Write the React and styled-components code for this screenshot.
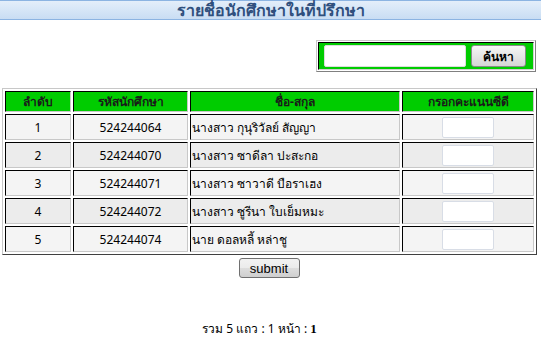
import React, { useState } from "react";
import styled, { createGlobalStyle } from "styled-components";

const students = [
  { no: 1, id: "524244064", name: "นางสาว กุนุริวัลย์ สัญญา" },
  { no: 2, id: "524244070", name: "นางสาว ซาดีลา ปะสะกอ" },
  { no: 3, id: "524244071", name: "นางสาว ซาวาดี บือราเฮง" },
  { no: 4, id: "524244072", name: "นางสาว ซูรีนา ใบเย็มหมะ" },
  { no: 5, id: "524244074", name: "นาย ดอลหลี้ หล่าชู" },
];

const GlobalStyle = createGlobalStyle`
  html, body {
    margin: 0;
    padding: 0;
    background: #ffffff;
  }
  body {
    font-family: Tahoma, "Noto Sans", "DejaVu Sans", sans-serif;
    font-size: 12px;
    color: #000;
  }
`;

const App = () => {
  const [scores, setScores] = useState({});
  const [query, setQuery] = useState("");

  return (
    <Page>
      <GlobalStyle />
      <TitleBar>รายชื่อนักศึกษาในที่ปรึกษา</TitleBar>

      <SearchRow>
        <SearchFrame>
          <SearchCell>
            <SearchInput value={query} onChange={(e) => setQuery(e.target.value)} />
            <SearchButton type="button">ค้นหา</SearchButton>
          </SearchCell>
        </SearchFrame>
      </SearchRow>

      <ListTable>
        <thead>
          <tr>
            <HeadCell $width={66}>ลำดับ</HeadCell>
            <HeadCell $width={115}>รหัสนักศึกษา</HeadCell>
            <HeadCell $width={210}>ชื่อ-สกุล</HeadCell>
            <HeadCell>กรอกคะแนนซีดี</HeadCell>
          </tr>
        </thead>
        <tbody>
          {students.map((s, i) => (
            <tr key={s.id}>
              <Cell $odd={i % 2 === 1}>{s.no}</Cell>
              <Cell $odd={i % 2 === 1}>{s.id}</Cell>
              <Cell $odd={i % 2 === 1} $left>
                {s.name}
              </Cell>
              <Cell $odd={i % 2 === 1}>
                <ScoreInput
                  value={scores[s.id] || ""}
                  onChange={(e) => setScores({ ...scores, [s.id]: e.target.value })}
                />
              </Cell>
            </tr>
          ))}
        </tbody>
      </ListTable>

      <SubmitRow>
        <SubmitButton type="button">submit</SubmitButton>
      </SubmitRow>

      <Footer>
        รวม 5 แถว : 1 หน้า : <PageNo>1</PageNo>
      </Footer>
    </Page>
  );
};

const Page = styled.div`
  width: 541px;
`;

const TitleBar = styled.div`
  height: 18px;
  line-height: 18px;
  border-top: 1px solid #8cb4e2;
  border-bottom: 1px solid #8cb4e2;
  background: linear-gradient(to bottom, #e4eefa 0%, #d6e6f7 50%, #c9ddf3 100%);
  text-align: center;
  font-weight: bold;
  font-size: 16px;
  color: #2f4f7d;
`;

// ------------ search box ------------ //
const SearchRow = styled.div`
  display: flex;
  justify-content: flex-end;
  padding: 20px 5px 0 0;
  height: 31px;
`;

const SearchFrame = styled.div`
  width: 216px;
  height: 28px;
  border: 1px solid;
  border-color: #c8c8c8 #808080 #808080 #c8c8c8;
  padding: 1px;
`;

const SearchCell = styled.div`
  height: 100%;
  box-sizing: border-box;
  border: 1px solid;
  border-color: #000 #d0d0d0 #d0d0d0 #000;
  background: #00cc00;
  display: flex;
  align-items: center;
  padding: 0 7px 0 5px;
  gap: 5px;
`;

const SearchInput = styled.input`
  width: 142px;
  height: 22px;
  box-sizing: border-box;
  border: 1px solid #dcdcdc;
  border-radius: 2px;
  background: #fff;
  outline: none;
`;

const SearchButton = styled.button`
  width: 55px;
  height: 22px;
  box-sizing: border-box;
  border: 1px solid #8a8a8a;
  border-radius: 3px;
  background: linear-gradient(to bottom, #f6f6f6 0%, #e6e6e6 50%, #d6d6d6 100%);
  font-family: Tahoma, "Noto Sans", "DejaVu Sans", sans-serif;
  font-size: 12px;
  font-weight: bold;
  color: #000;
  padding: 0;
`;

// ------------ list table ------------ //
const ListTable = styled.table`
  margin: 17px 0 0 2px;
  width: 535px;
  border-collapse: separate;
  border-spacing: 2px;
  border: 1px solid;
  border-color: #c8c8c8 #404040 #404040 #c8c8c8;
  table-layout: fixed;
`;

const HeadCell = styled.th`
  width: ${({ $width }) => ($width ? `${$width - 2}px` : "auto")};
  height: 19px;
  padding: 0;
  border: 1px solid;
  border-color: #000 #c8c8c8 #c8c8c8 #000;
  background: #00cc00;
  color: #1a1a1a;
  font-size: 12px;
  font-weight: bold;
  text-align: center;
`;

const Cell = styled.td`
  height: 24px;
  padding: 0 1px;
  border: 1px solid;
  border-color: #000 #c8c8c8 #c8c8c8 #000;
  background: ${({ $odd }) => ($odd ? "#ececec" : "#f4f4f4")};
  text-align: ${({ $left }) => ($left ? "left" : "center")};
  font-size: 12px;
  vertical-align: middle;
`;

const ScoreInput = styled.input`
  display: block;
  margin: 0 auto;
  width: 52px;
  height: 21px;
  box-sizing: border-box;
  border: 1px solid #d8dde6;
  border-radius: 2px;
  background: #fff;
  outline: none;
`;

const SubmitRow = styled.div`
  display: flex;
  justify-content: center;
  padding: 3px 3px 0 0;
`;

const SubmitButton = styled.button`
  width: 61px;
  height: 20px;
  box-sizing: border-box;
  border: 1px solid #707070;
  border-radius: 3px;
  background: linear-gradient(to bottom, #f2f2f2 0%, #ebebeb 50%, #dddddd 51%, #cfcfcf 100%);
  font-family: Arial, "Liberation Sans", sans-serif;
  font-size: 13px;
  color: #000;
  padding: 0;
`;

const Footer = styled.div`
  margin-top: 41px;
  padding-right: 22px;
  text-align: center;
  font-size: 12px;
`;

const PageNo = styled.b`
  font-family: "Times New Roman", "Liberation Serif", serif;
  font-size: 13px;
  font-weight: bold;
`;

export default App;
